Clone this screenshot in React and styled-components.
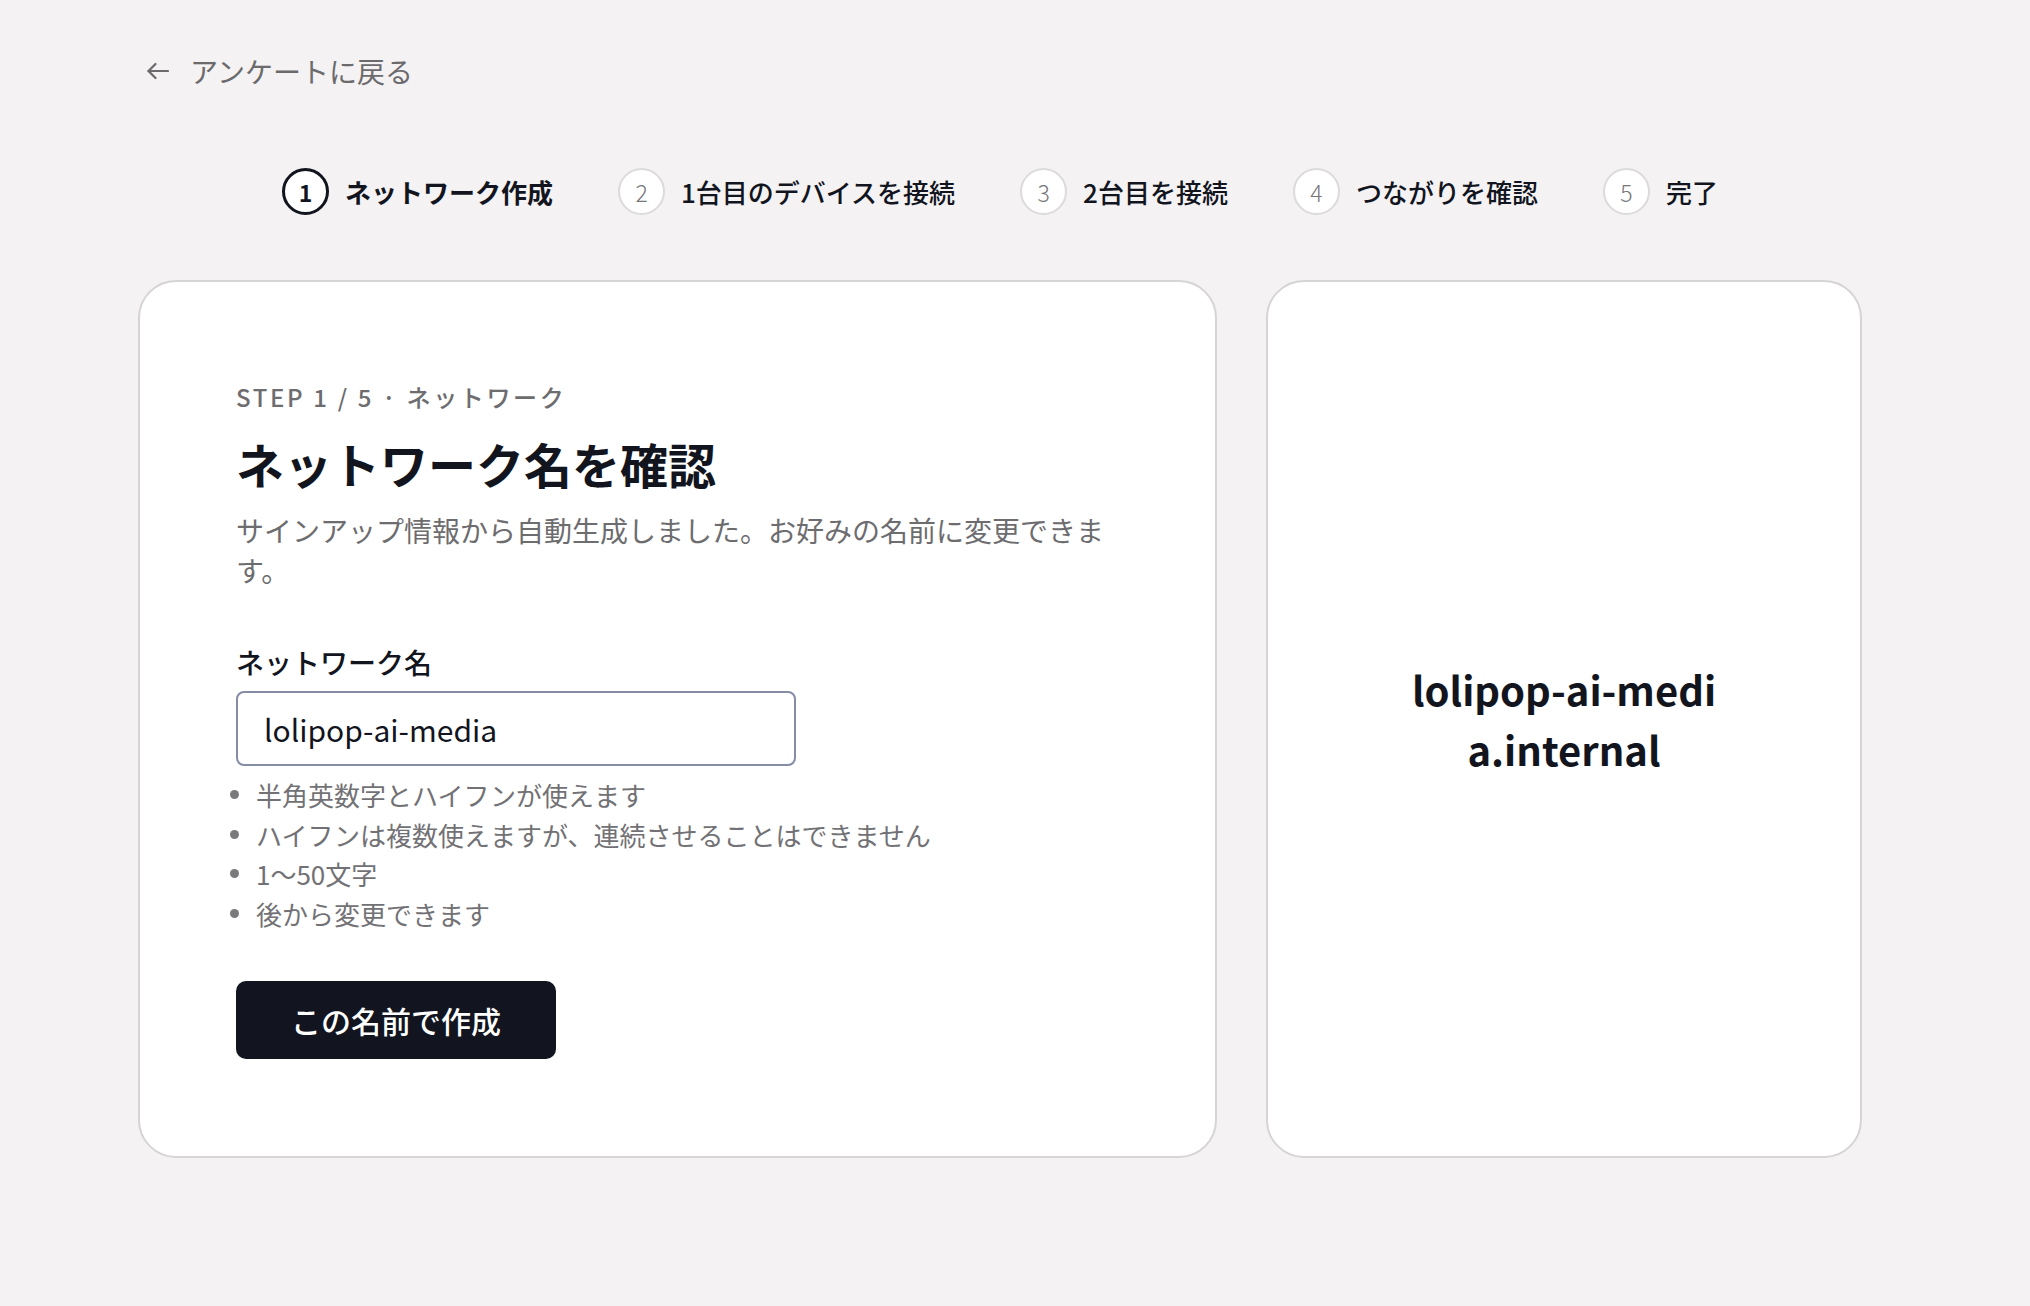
import styled, { createGlobalStyle } from "styled-components"

const steps = [
  { no: 1, label: "ネットワーク作成" },
  { no: 2, label: "1台目のデバイスを接続" },
  { no: 3, label: "2台目を接続" },
  { no: 4, label: "つながりを確認" },
  { no: 5, label: "完了" },
]

const rules = [
  "半角英数字とハイフンが使えます",
  "ハイフンは複数使えますが、連続させることはできません",
  "1〜50文字",
  "後から変更できます",
]

function BackArrow() {
  return (
    <svg width="22" height="18" viewBox="0 0 22 18" fill="none" stroke="currentColor" strokeWidth="2.2" strokeLinecap="round" strokeLinejoin="round">
      <path d="M21 9H1.5" />
      <path d="M8.5 2 1.5 9l7 7" />
    </svg>
  )
}

export default function App() {
  const name = "lolipop-ai-media"

  return (
    <>
      <GlobalStyle />
      <Page>
        <BackLink href="#">
          <BackArrow />
          アンケートに戻る
        </BackLink>

        <Stepper>
          {steps.map((s) => (
            <Step key={s.no}>
              <StepCircle $active={s.no === 1}>{s.no}</StepCircle>
              <StepLabel $active={s.no === 1}>{s.label}</StepLabel>
            </Step>
          ))}
        </Stepper>

        <Columns>
          <FormCard>
            <Eyebrow>STEP 1 / 5 · ネットワーク</Eyebrow>
            <Title>ネットワーク名を確認</Title>
            <Lead>サインアップ情報から自動生成しました。お好みの名前に変更できます。</Lead>

            <FieldLabel htmlFor="network-name">ネットワーク名</FieldLabel>
            <NameInput id="network-name" defaultValue={name} />
            <Rules>
              {rules.map((r) => (
                <Rule key={r}>{r}</Rule>
              ))}
            </Rules>

            <PrimaryButton>この名前で作成</PrimaryButton>
          </FormCard>

          <PreviewCard>
            <Domain>{name}.internal</Domain>
          </PreviewCard>
        </Columns>
      </Page>
    </>
  )
}

const GlobalStyle = createGlobalStyle`
  html, body {
    margin: 0;
    background: #f4f2f3;
  }
  body {
    font-family: "Noto Sans CJK JP", "Noto Sans", sans-serif;
    color: #12151e;
  }
  * {
    box-sizing: border-box;
  }
`;

const Page = styled.div`
  width: 1724px;
  margin-left: 138px;
  padding-top: 51px;
  padding-bottom: 120px;
`;

const BackLink = styled.a`
  display: inline-flex;
  align-items: center;
  gap: 21px;
  margin-left: 9px;
  height: 40px;
  font-size: 28px;
  line-height: 40px;
  color: #6b6a6c;
  text-decoration: none;

  svg {
    color: #6b6a6c;
  }
`;

const Stepper = styled.div`
  display: flex;
  justify-content: center;
  align-items: center;
  gap: 65px;
  margin-top: 77px;
  height: 47px;
`;

const Step = styled.div`
  display: flex;
  align-items: center;
  gap: 16px;
`;

const StepCircle = styled.span`
  display: flex;
  align-items: center;
  justify-content: center;
  width: 47px;
  height: 47px;
  border-radius: 50%;
  background: #fff;
  border: ${(p) => (p.$active ? "3px solid #12151e" : "2px solid #dcdadb")};
  color: ${(p) => (p.$active ? "#12151e" : "#77767a")};
  font-size: 23px;
  font-weight: ${(p) => (p.$active ? 700 : 300)};
`;

const StepLabel = styled.span`
  font-size: 26px;
  font-weight: ${(p) => (p.$active ? 700 : 500)};
  color: #12151e;
`;

const Columns = styled.div`
  display: grid;
  grid-template-columns: 1079px 596px;
  gap: 49px;
  margin-top: 65px;
`;

const Card = styled.section`
  background: #fff;
  border: 2px solid #d6d4d5;
  border-radius: 38px;
  height: 878px;
`;

const FormCard = styled(Card)`
  padding: 97px 96px;
`;

const Eyebrow = styled.div`
  font-size: 24px;
  line-height: 36px;
  letter-spacing: 0.11em;
  font-weight: 500;
  color: #6d6c6f;
`;

const Title = styled.h1`
  margin: 17px 0 0;
  font-size: 48px;
  line-height: 62px;
  font-weight: 700;
  color: #12151e;
`;

const Lead = styled.p`
  margin: 16px 0 0;
  font-size: 28px;
  line-height: 40px;
  color: #6d6c6f;
`;

const FieldLabel = styled.label`
  display: block;
  margin-top: 52px;
  font-size: 28px;
  line-height: 40px;
  font-weight: 500;
  color: #12151e;
`;

const NameInput = styled.input`
  display: block;
  margin-top: 9px;
  width: 560px;
  height: 75px;
  padding: 0 26px;
  border: 2px solid #868ca6;
  border-radius: 8px;
  background: #fff;
  font-family: inherit;
  font-size: 30px;
  color: #12151e;
  outline: none;
`;

const Rules = styled.ul`
  margin: 9px 0 0 -6px;
  padding: 0;
  list-style: none;
`;

const Rule = styled.li`
  display: flex;
  align-items: center;
  gap: 17px;
  font-size: 26px;
  line-height: 39.5px;
  color: #727175;

  &::before {
    content: "";
    flex: none;
    width: 9px;
    height: 9px;
    border-radius: 50%;
    background: #7a797c;
  }
`;

const PrimaryButton = styled.button`
  display: block;
  margin-top: 48px;
  width: 320px;
  height: 78px;
  border: 0;
  border-radius: 10px;
  background: #12151f;
  color: #fff;
  font-family: inherit;
  font-size: 30px;
  font-weight: 500;
  cursor: pointer;
`;

const PreviewCard = styled(Card)`
  display: flex;
  align-items: center;
  justify-content: center;
  padding: 0 40px;
`;

const Domain = styled.div`
  width: 316px;
  font-size: 40px;
  line-height: 60px;
  font-weight: 700;
  text-align: center;
  word-break: break-all;
  color: #12151e;
`;
